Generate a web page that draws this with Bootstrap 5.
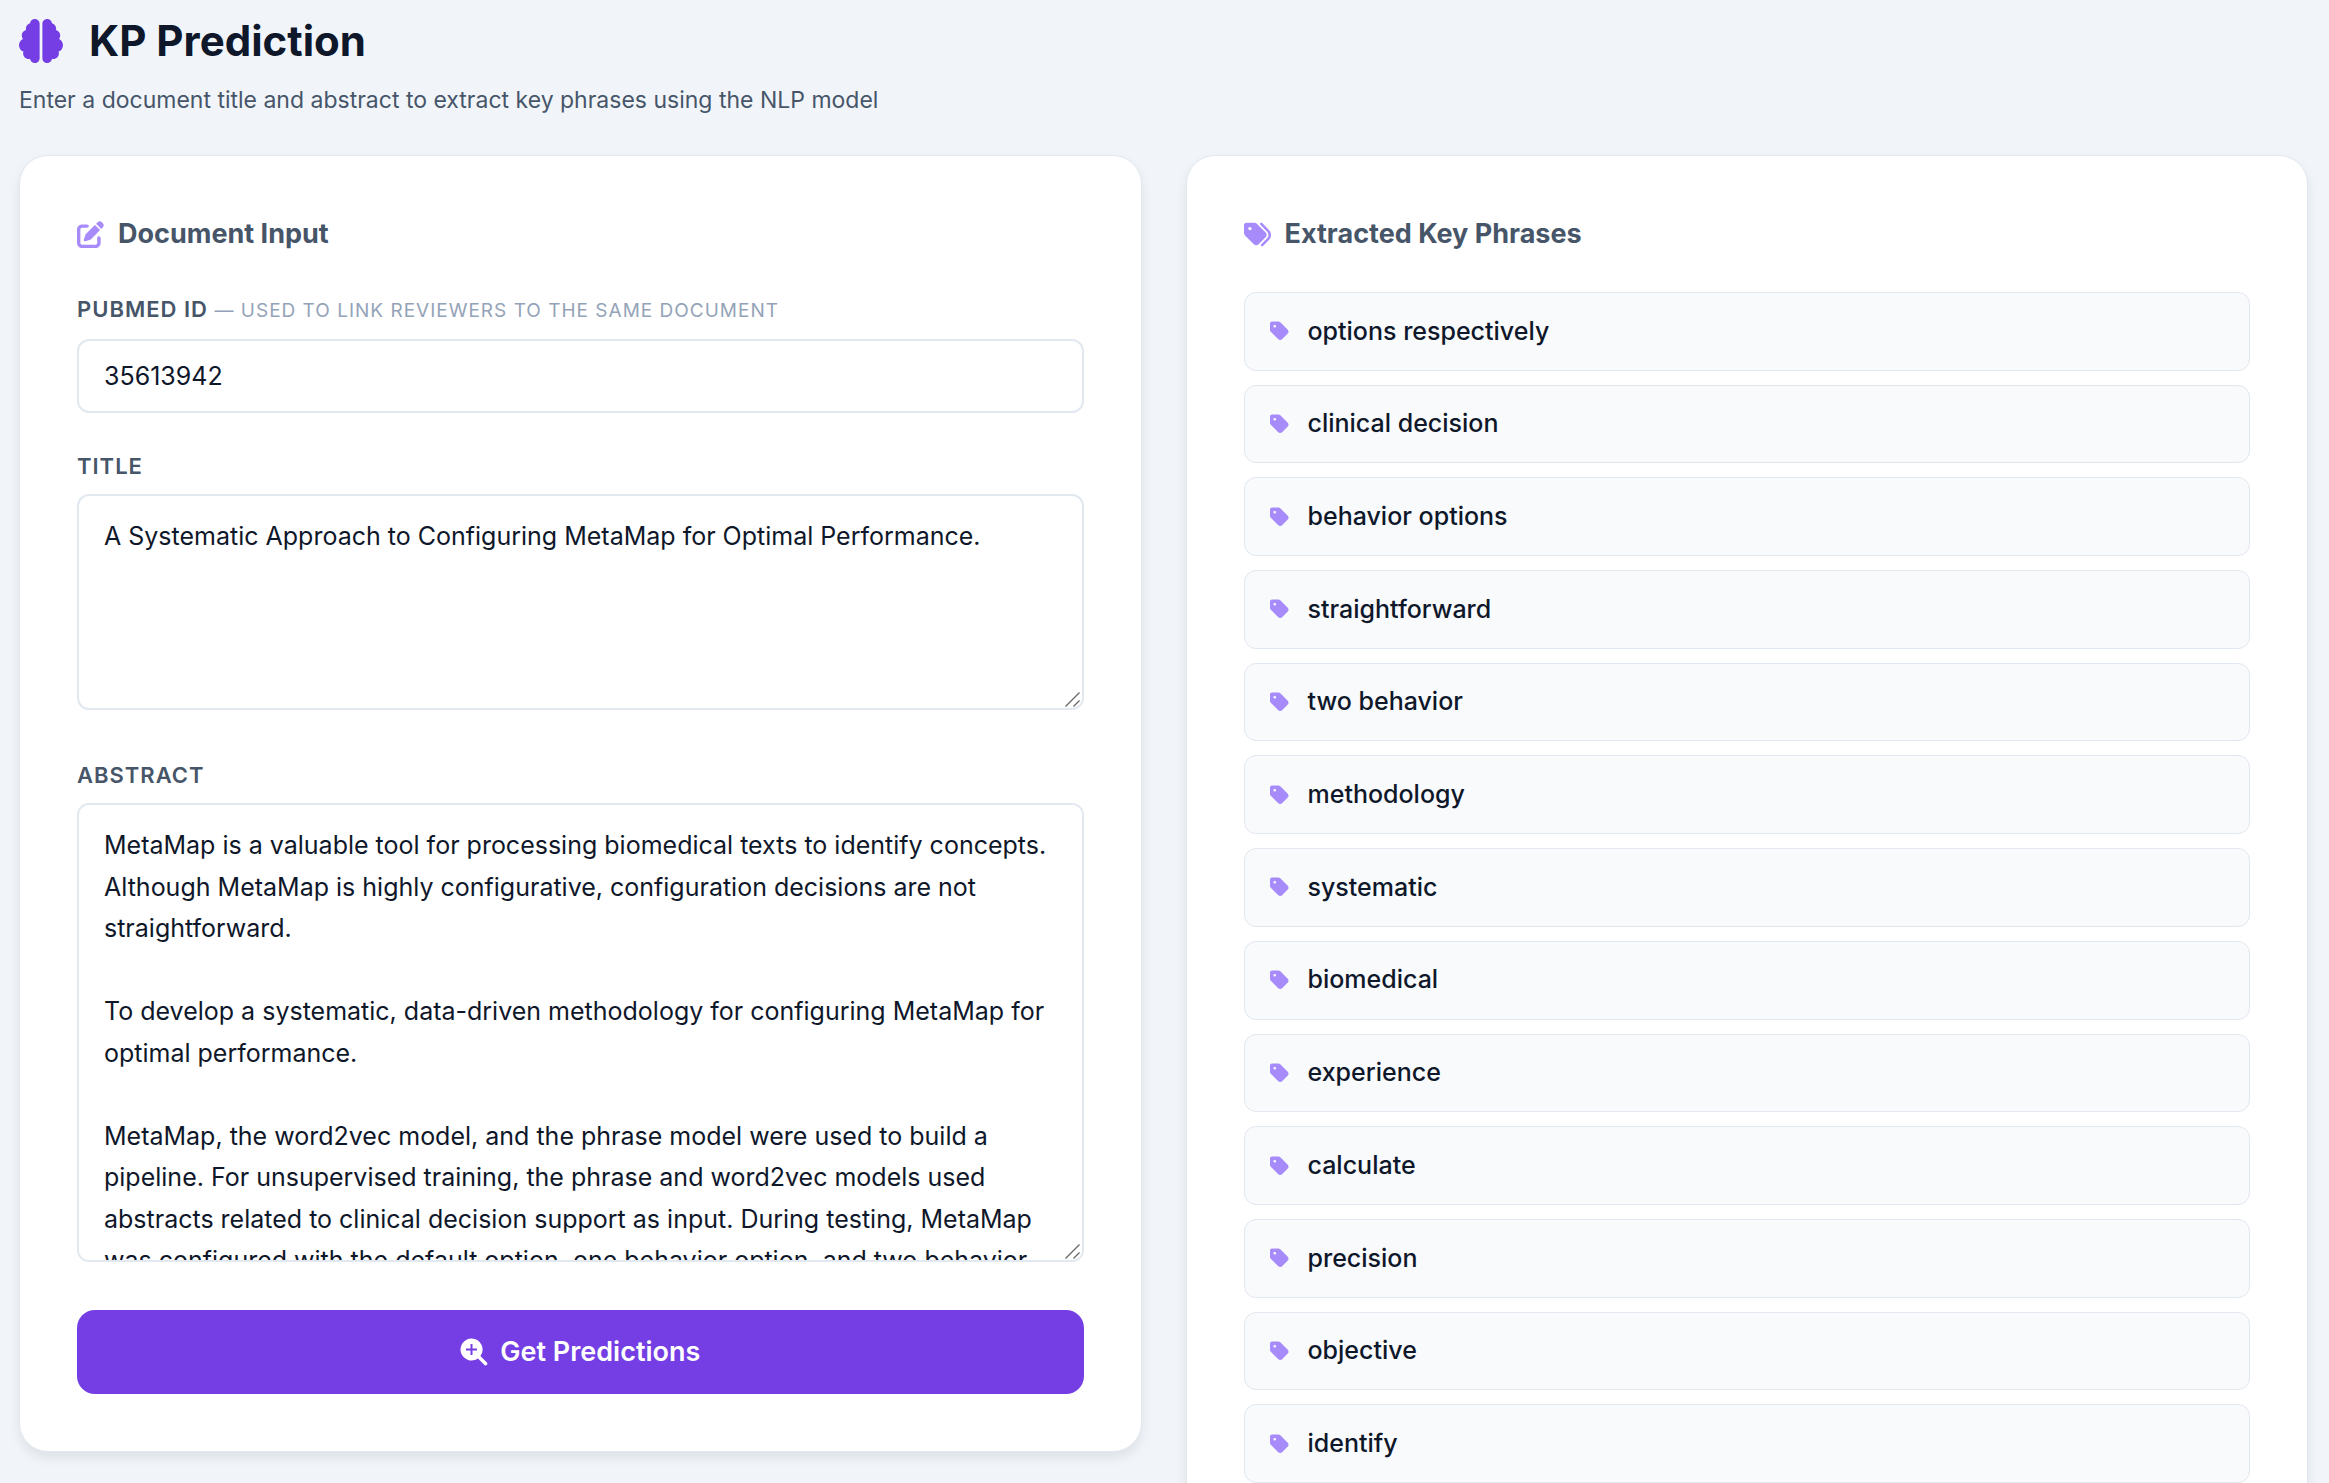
<!DOCTYPE html>
<html lang="en">
<head>
<meta charset="utf-8">
<meta name="viewport" content="width=device-width, initial-scale=1">
<title>KP Prediction</title>
<link rel="stylesheet" href="https://cdn.jsdelivr.net/npm/bootstrap@5.3.0/dist/css/bootstrap.min.css">
<style>
  html { scrollbar-width: none; }
  body { background: #f1f5fa; color: #0f172a; font-family: Inter, "Liberation Sans", sans-serif; font-size: 25px; }
  svg { fill: currentColor; flex: none; }
  .page-wrap { padding: 12px 21px 24px 19px; }
  .page-title { font-size: 42px; line-height: 58px; font-weight: 700; gap: 26px; margin-bottom: 12px; }
  .page-title svg { width: 44px; height: 44px; color: #743ee4; }
  .page-intro { font-size: 23px; line-height: 36px; color: #475569; margin-bottom: 37px; }
  .panels { --bs-gutter-x: 44px; --bs-gutter-y: 44px; }
  .panel { border: 1px solid #e2e8f0; border-radius: 29px; padding: 57px; box-shadow: 0 6px 12px rgba(0, 0, 0, .08); }
  .panel-title { font-size: 27px; line-height: 42px; font-weight: 700; color: #475569; gap: 14px; }
  .form-title { margin-bottom: 37px; }
  .list-title { margin-bottom: 37px; }
  .panel-title svg { width: 27px; height: 27px; color: #a78bfa; }
  .field-group { margin-bottom: 36px; }
  .field-label { font-size: 22px; line-height: 34px; font-weight: 600; color: #475569; text-transform: uppercase; letter-spacing: 1px; margin-bottom: 11px; }
  .field-hint { font-size: 19px; font-weight: 400; color: #94a3b8; }
  .field-box, .field-box:focus { border: 2px solid #e2e8f0; border-radius: 12px; padding: 14px 25px; font-size: 25px; line-height: 1.66; color: #0f172a; background: #fff; }
  .field-box::-webkit-scrollbar { width: 0; }
  .field-box::-webkit-resizer { display: none; }
  .id-box { height: 74px; }
  textarea.field-box { display: block; padding-top: 20px; resize: vertical; }
  .title-box { height: 216px; }
  .abstract-box { height: 459px; }
  .grip { right: 4px; bottom: 3px; width: 15px; height: 15px; fill: none; stroke: #6b6b6b; stroke-width: 1.4; pointer-events: none; }
  .btn-predict, .btn-predict:hover { background: #743ee4; color: #fff; border: 0; border-radius: 18px; height: 84px; font-size: 27px; font-weight: 600; gap: 12px; }
  .btn-predict svg { width: 28px; height: 28px; }
  .phrases { display: grid; grid-auto-rows: 1fr; gap: 14px; min-height: 1191px; }
  .phrase { background: #f8fafc; border: 1px solid #e2e8f0; border-radius: 12px; padding: 0 25px; gap: 19px; font-weight: 500; }
  .phrase svg { width: 19px; height: 22px; color: #a78bfa; }
</style>
</head>
<body>
<svg class="d-none" aria-hidden="true">
  <symbol id="tag" viewBox="0 0 448 512"><path d="M0 80V229.5c0 17 6.7 33.3 18.7 45.3l176 176c25 25 65.5 25 90.5 0L418.7 317.3c25-25 25-65.5 0-90.5l-176-176c-12-12-28.3-18.7-45.3-18.7H48C21.5 32 0 53.5 0 80zm112 32a32 32 0 1 1 0 64 32 32 0 1 1 0-64z"/></symbol>
  <symbol id="grip" viewBox="0 0 15 15"><path d="M.5 14.500 14.500.5M8.500 14.500l6-6"/></symbol>
</svg>
<main class="container-fluid page-wrap">
  <h1 class="page-title d-flex align-items-center">
    <svg viewBox="0 0 512 512" aria-hidden="true"><path d="M184 0c30.9 0 56 25.1 56 56V456c0 30.9-25.1 56-56 56c-28.9 0-52.7-21.9-55.7-50.1c-5.2 1.4-10.7 2.1-16.3 2.1c-35.3 0-64-28.7-64-64c0-7.4 1.3-14.6 3.6-21.2C21.4 367.4 0 338.2 0 304c0-31.9 18.7-59.5 45.8-72.3C37.1 220.8 32 207 32 192c0-30.7 21.6-56.3 50.4-62.6C80.8 123.9 80 118 80 112c0-29.9 20.6-55.1 48.3-62.1C131.3 21.9 155.1 0 184 0zM328 0c28.9 0 52.6 21.9 55.7 49.9c27.8 7 48.3 32.1 48.3 62.1c0 6-.8 11.9-2.4 17.4c28.8 6.2 50.4 31.9 50.4 62.6c0 15-5.1 28.8-13.8 39.7C493.3 244.5 512 272.1 512 304c0 34.2-21.4 63.4-51.6 74.8c2.3 6.6 3.6 13.8 3.6 21.2c0 35.3-28.7 64-64 64c-5.6 0-11.1-.7-16.3-2.1c-3 28.2-26.8 50.1-55.7 50.1c-30.9 0-56-25.1-56-56V56c0-30.9 25.1-56 56-56z"/></svg>
    KP Prediction
  </h1>
  <p class="page-intro">Enter a document title and abstract to extract key phrases using the NLP model</p>
  <div class="row panels">
    <div class="col-6">
      <form class="panel bg-white">
        <h2 class="panel-title form-title d-flex align-items-center">
          <svg viewBox="0 0 512 512" aria-hidden="true"><path d="M471.6 21.7c-21.9-21.9-57.3-21.9-79.2 0L362.3 51.7l97.9 97.9 30.1-30.1c21.9-21.9 21.9-57.3 0-79.2L471.6 21.7zm-299.2 220c-6.1 6.1-10.8 13.6-13.5 21.9l-29.6 88.8c-2.9 8.6-.6 18.1 5.8 24.6s15.9 8.7 24.6 5.8l88.8-29.6c8.2-2.7 15.7-7.4 21.9-13.5L437.7 172.3 339.7 74.3 172.4 241.7zM96 64C43 64 0 107 0 160V416c0 53 43 96 96 96H352c53 0 96-43 96-96V320c0-17.7-14.3-32-32-32s-32 14.3-32 32v96c0 17.7-14.3 32-32 32H96c-17.7 0-32-14.3-32-32V160c0-17.7 14.3-32 32-32h96c17.7 0 32-14.3 32-32s-14.3-32-32-32H96z"/></svg>
          Document Input
        </h2>
        <div class="field-group">
          <label class="field-label d-block" for="pubmed">PubMed ID <span class="field-hint">— used to link reviewers to the same document</span></label>
          <input class="form-control field-box id-box" id="pubmed" type="text" value="35613942">
        </div>
        <div class="mb-5">
          <label class="field-label d-block" for="doc-title">Title</label>
          <div class="position-relative">
            <textarea class="form-control field-box title-box" id="doc-title">A Systematic Approach to Configuring MetaMap for Optimal Performance.</textarea>
            <svg class="grip position-absolute" aria-hidden="true"><use href="#grip"/></svg>
          </div>
        </div>
        <div class="mb-5">
          <label class="field-label d-block" for="abstract">Abstract</label>
          <div class="position-relative">
            <textarea class="form-control field-box abstract-box" id="abstract">MetaMap is a valuable tool for processing biomedical texts to identify concepts. Although MetaMap is highly configurative, configuration decisions are not straightforward.

To develop a systematic, data-driven methodology for configuring MetaMap for optimal performance.

MetaMap, the word2vec model, and the phrase model were used to build a pipeline. For unsupervised training, the phrase and word2vec models used abstracts related to clinical decision support as input. During testing, MetaMap was configured with the default option, one behavior option, and two behavior options.</textarea>
            <svg class="grip position-absolute" aria-hidden="true"><use href="#grip"/></svg>
          </div>
        </div>
        <button class="btn btn-predict w-100 d-flex align-items-center justify-content-center" type="button">
          <svg viewBox="0 0 28 28" aria-hidden="true"><path fill-rule="evenodd" d="M11.500 .5a11 11 0 0 1 8.900 17.500l6.500 6.500a1.700 1.700 0 0 1-2.400 2.400l-6.500-6.500A11 11 0 1 1 11.500 .5zM10.500 6v4.500H6v2h4.500V17h2v-4.500H17v-2h-4.500V6z"/></svg>
          Get Predictions
        </button>
      </form>
    </div>
    <div class="col-6">
      <section class="panel bg-white">
        <h2 class="panel-title list-title d-flex align-items-center">
          <svg viewBox="0 0 512 512" aria-hidden="true"><path d="M345 39.1L472.8 168.4c52.4 53 52.4 138.2 0 191.2L360.8 472.9c-9.3 9.4-24.5 9.5-33.9 .2s-9.5-24.5-.2-33.9L438.6 325.9c33.9-34.3 33.9-89.4 0-123.7L310.9 72.9c-9.3-9.4-9.2-24.6 .2-33.9s24.6-9.2 33.9 .2zM0 229.5V80C0 53.500 21.500 32 48 32H197.500c17 0 33.300 6.700 45.300 18.700l168 168c25 25 25 65.500 0 90.500L277.300 442.700c-25 25-65.500 25-90.500 0l-168-168C6.700 262.700 0 246.500 0 229.500zM144 144a32 32 0 1 0 -64 0 32 32 0 1 0 64 0z"/></svg>
          Extracted Key Phrases
        </h2>
        <ul class="phrases list-unstyled mb-0">
          <li class="phrase d-flex align-items-center"><svg aria-hidden="true"><use href="#tag"/></svg>options respectively</li>
          <li class="phrase d-flex align-items-center"><svg aria-hidden="true"><use href="#tag"/></svg>clinical decision</li>
          <li class="phrase d-flex align-items-center"><svg aria-hidden="true"><use href="#tag"/></svg>behavior options</li>
          <li class="phrase d-flex align-items-center"><svg aria-hidden="true"><use href="#tag"/></svg>straightforward</li>
          <li class="phrase d-flex align-items-center"><svg aria-hidden="true"><use href="#tag"/></svg>two behavior</li>
          <li class="phrase d-flex align-items-center"><svg aria-hidden="true"><use href="#tag"/></svg>methodology</li>
          <li class="phrase d-flex align-items-center"><svg aria-hidden="true"><use href="#tag"/></svg>systematic</li>
          <li class="phrase d-flex align-items-center"><svg aria-hidden="true"><use href="#tag"/></svg>biomedical</li>
          <li class="phrase d-flex align-items-center"><svg aria-hidden="true"><use href="#tag"/></svg>experience</li>
          <li class="phrase d-flex align-items-center"><svg aria-hidden="true"><use href="#tag"/></svg>calculate</li>
          <li class="phrase d-flex align-items-center"><svg aria-hidden="true"><use href="#tag"/></svg>precision</li>
          <li class="phrase d-flex align-items-center"><svg aria-hidden="true"><use href="#tag"/></svg>objective</li>
          <li class="phrase d-flex align-items-center"><svg aria-hidden="true"><use href="#tag"/></svg>identify</li>
        </ul>
      </section>
    </div>
  </div>
</main>
<script src="https://cdn.jsdelivr.net/npm/bootstrap@5.3.0/dist/js/bootstrap.bundle.min.js"></script>
</body>
</html>
